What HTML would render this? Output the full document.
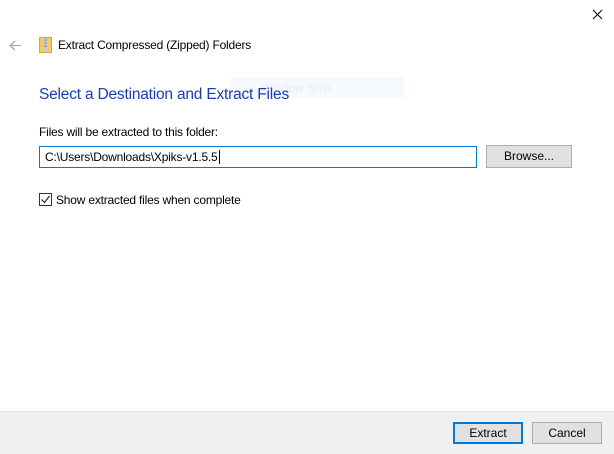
<!DOCTYPE html>
<html><head><style>
*{margin:0;padding:0;box-sizing:border-box}
body{width:614px;height:454px;background:#fff;position:relative;overflow:hidden;font-family:"Liberation Sans",sans-serif;font-size:12px;color:#000}
.a{position:absolute;white-space:nowrap}
.btn{position:absolute;background:#e1e1e1;border:1px solid #adadad;text-align:center;line-height:19px;font-size:12px}
</style></head><body>
<svg class="a" style="left:592px;top:9px" width="11" height="11"><path d="M1 1L10 10M10 1L1 10" stroke="#000" stroke-width="1"/></svg>
<svg class="a" style="left:9px;top:40px" width="13" height="11"><path d="M1 5.5H12M6 1L1 5.5L6 10" stroke="#aaa" stroke-width="1.3" fill="none"/></svg>
<svg class="a" style="left:39px;top:37px" width="13" height="16"><rect x="0.5" y="0.5" width="12" height="15" fill="#f2cd5c" stroke="#d9a63a"/><rect x="5" y="1" width="3" height="14" fill="#ccc"/><path d="M5 3h3M5 6h3M5 9h3" stroke="#888"/></svg>
<div class="a" style="left:58px;top:38px;letter-spacing:-0.2px">Extract Compressed (Zipped) Folders</div>
<div class="a" style="left:231px;top:77px;width:173px;height:21px;background:#f6f9fd;color:#e8ecf1;font-size:12px;padding:4px 0 0 30px">Window Snip</div>
<div class="a" style="left:39px;top:86px;font-size:15.5px;color:#1a3caf;letter-spacing:-0.2px">Select a Destination and Extract Files</div>
<div class="a" style="left:39px;top:125px;letter-spacing:-0.2px">Files will be extracted to this folder:</div>
<div class="a" style="left:39px;top:146px;width:438px;height:22px;border:1px solid #0078d7;padding:3px 0 0 5px;letter-spacing:-0.2px">C:\Users\Downloads\Xpiks-v1.5.5<span style="border-left:1px solid #000;margin-left:1px"></span></div>
<div class="btn" style="left:486px;top:145px;width:86px;height:23px;line-height:21px">Browse...</div>
<div class="a" style="left:39px;top:193px;width:13px;height:13px;border:1px solid #333"></div>
<svg class="a" style="left:40px;top:194px" width="11" height="11"><path d="M1.5 5.5L4.5 8.5L9.5 2" stroke="#222" stroke-width="1.2" fill="none"/></svg>
<div class="a" style="left:56px;top:193px;letter-spacing:-0.2px">Show extracted files when complete</div>
<div class="a" style="left:0;top:411px;width:614px;height:43px;background:#f0f0f0;border-top:1px solid #dfdfdf"></div>
<div class="btn" style="left:453px;top:422px;width:70px;height:22px;border:2px solid #0078d7;line-height:18px">Extract</div>
<div class="btn" style="left:532px;top:422px;width:70px;height:22px;line-height:20px">Cancel</div>
</body></html>
